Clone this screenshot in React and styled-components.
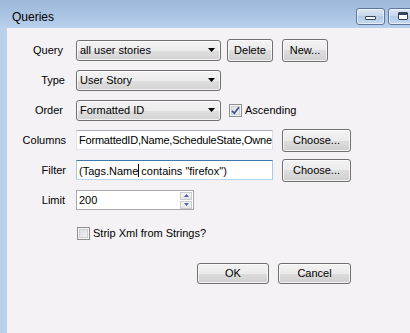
import React from "react";
import styled, { createGlobalStyle } from "styled-components";

const GlobalStyle = createGlobalStyle`
  html, body { margin: 0; padding: 0; background: #f5f2f5; }
  body { font-family: "Liberation Sans", Arial, sans-serif; font-size: 11px; color: #000; }
  * { box-sizing: border-box; }
`;

const Window = styled.div`
  width: 410px;
  height: 333px;
  overflow: hidden;
  display: flex;
  flex-direction: column;
  background: #b9d1ea;
`;

const TitleBar = styled.div`
  height: 28px;
  flex-shrink: 0;
  display: flex;
  align-items: flex-start;
  justify-content: space-between;
  padding-left: 12px;
  background: linear-gradient(#9db8d9, #a9c3e2 50%, #b9d1ec);
`;

const Title = styled.span`
  font-size: 12px;
  line-height: 14px;
  margin-top: 10px;
`;

const CaptionGroup = styled.div`
  display: flex;
  gap: 3px;
  margin-top: 8px;
  margin-right: -7px;
  flex-shrink: 0;
`;

const CaptionButton = styled.div`
  width: 29px;
  height: 17px;
  border: 1px solid #5d789c;
  border-radius: 3px;
  background: linear-gradient(#dce7f4, #c6d7ec 45%, #b4cae5 50%, #c5d9ef);
  box-shadow: inset 0 0 0 1px rgba(255, 255, 255, 0.55);
  display: flex;
  justify-content: center;
  align-items: flex-start;
`;

const MinGlyph = styled.div`
  width: 11px;
  height: 4px;
  margin-top: 7px;
  border: 1px solid #34435a;
  border-radius: 1px;
  background: #fff;
`;

const MaxGlyph = styled.div`
  width: 10px;
  height: 8px;
  margin-top: 3px;
  border: 1px solid #34435a;
  border-radius: 1px;
  background: #fff;
  box-shadow: inset 0 2px 0 #34435a;
`;

const Client = styled.div`
  flex: 1;
  margin-left: 7px;
  background: #f5f2f5;
  display: flex;
  flex-direction: column;
  padding-top: 7px;
`;

const Row = styled.div`
  display: flex;
  align-items: center;
  height: 30px;
  flex-shrink: 0;
  padding-left: ${(p) => p.$indent || 0}px;
  margin-top: ${(p) => p.$gap || 0}px;
`;

const Label = styled.span`
  width: 59px;
  flex-shrink: 0;
  text-align: right;
  padding-right: ${(p) => p.$inset || 0}px;
  margin-right: 10px;
  white-space: nowrap;
`;

const Combo = styled.div`
  width: 145px;
  height: 21px;
  border: 1px solid #707070;
  border-radius: 3px;
  background: linear-gradient(#f3f3f3 0%, #ececec 50%, #dfdfdf 50%, #d3d3d3 100%);
  box-shadow: inset 0 0 0 1px rgba(255, 255, 255, 0.7);
  display: flex;
  align-items: center;
  justify-content: space-between;
  padding: 0 5px 0 3px;
  white-space: nowrap;
`;

const Button = styled.div`
  width: ${(p) => p.$w}px;
  height: ${(p) => p.$h || 23}px;
  margin-left: ${(p) => p.$ml || 0}px;
  flex-shrink: 0;
  border: 1px solid #707070;
  border-radius: 3px;
  background: linear-gradient(#f2f2f2 0%, #ebebeb 50%, #dddddd 50%, #cfcfcf 100%);
  box-shadow: inset 0 0 0 1px rgba(255, 255, 255, 0.75);
  display: flex;
  align-items: center;
  justify-content: center;
  white-space: nowrap;
`;

const TextBox = styled.div`
  width: ${(p) => p.$w}px;
  height: 20px;
  flex-shrink: 0;
  background: #fff;
  border: 1px solid;
  border-color: ${(p) =>
    p.$focused ? "#3d7bad #a4c9e3 #b7d5ed #a4c9e3" : "#abadb3 #dbdfe6 #e3e9ef #e2e3ea"};
  display: flex;
  align-items: center;
  padding-left: 2px;
  overflow: hidden;
  white-space: nowrap;
  letter-spacing: ${(p) => p.$tight ? "-0.2px" : "normal"};
`;

const Caret = styled.span`
  display: inline-block;
  width: 1px;
  height: 13px;
  margin-right: -1px;
  background: #000;
  vertical-align: -2px;
`;

const Numeric = styled.div`
  width: 118px;
  height: 20px;
  background: #fff;
  border: 1px solid #a9a9a9;
  display: flex;
  align-items: center;
  justify-content: space-between;
  padding: 0 1px 0 2px;
`;

const Spinner = styled.div`
  display: flex;
  flex-direction: column;
  gap: 1px;
`;

const SpinButton = styled.div`
  width: 12px;
  height: 8px;
  border: 1px solid #c9cbd0;
  background: linear-gradient(#f7f7f7, #e4e4e4);
  display: flex;
  align-items: center;
  justify-content: center;
`;

const CheckBox = styled.div`
  width: 13px;
  height: 13px;
  flex-shrink: 0;
  margin-left: ${(p) => p.$ml || 0}px;
  margin-right: 3px;
  border: 1px solid #8e8f8f;
  background: linear-gradient(135deg, #d6d8db, #f7f7f7);
  box-shadow: inset 0 0 0 1px #f4f4f4, inset 0 0 0 2px #cdd0d4;
  display: flex;
  align-items: center;
  justify-content: center;
`;

const Footer = styled(Row)`
  justify-content: flex-end;
  padding-right: 59px;
`;

const Arrow = ({ color = "#000", w = 7, h = 4, up = false }) => (
  <svg width={w} height={h} viewBox={`0 0 ${w} ${h}`}>
    <polygon
      points={up ? `0,${h} ${w / 2},0 ${w},${h}` : `0,0 ${w},0 ${w / 2},${h}`}
      fill={color}
    />
  </svg>
);

const Check = () => (
  <svg width="9" height="9" viewBox="0 0 9 9">
    <path d="M1 4.8 L3.3 7.3 L8 1.2" stroke="#3a4f8c" strokeWidth="1.7" fill="none" />
  </svg>
);

export default function App() {
  return (
    <>
      <GlobalStyle />
      <Window>
        <TitleBar>
          <Title>Queries</Title>
          <CaptionGroup>
            <CaptionButton>
              <MinGlyph />
            </CaptionButton>
            <CaptionButton>
              <MaxGlyph />
            </CaptionButton>
          </CaptionGroup>
        </TitleBar>
        <Client>
          <Row>
            <Label $inset={3}>Query</Label>
            <Combo>
              <span>all user stories</span>
              <Arrow />
            </Combo>
            <Button $w={46} $ml={6}>Delete</Button>
            <Button $w={46} $ml={9}>New...</Button>
          </Row>
          <Row>
            <Label $inset={1}>Type</Label>
            <Combo>
              <span>User Story</span>
              <Arrow />
            </Combo>
          </Row>
          <Row>
            <Label $inset={3}>Order</Label>
            <Combo>
              <span>Formatted ID</span>
              <Arrow />
            </Combo>
            <CheckBox $ml={8}>
              <Check />
            </CheckBox>
            <span>Ascending</span>
          </Row>
          <Row>
            <Label>Columns</Label>
            <TextBox $w={197} $tight>FormattedID,Name,ScheduleState,Owne</TextBox>
            <Button $w={69} $ml={9}>Choose...</Button>
          </Row>
          <Row>
            <Label>Filter</Label>
            <TextBox $w={197} $focused>
              <span>
                (Tags.Name<Caret /> contains "firefox")
              </span>
            </TextBox>
            <Button $w={69} $ml={9}>Choose...</Button>
          </Row>
          <Row>
            <Label $inset={1}>Limit</Label>
            <Numeric>
              <span>200</span>
              <Spinner>
                <SpinButton>
                  <Arrow up color="#4d60a0" w={5} h={3} />
                </SpinButton>
                <SpinButton>
                  <Arrow color="#4d60a0" w={5} h={3} />
                </SpinButton>
              </Spinner>
            </Numeric>
          </Row>
          <Row $indent={70} $gap={3}>
            <CheckBox />
            <span>Strip Xml from Strings?</span>
          </Row>
          <Footer $gap={10}>
            <Button $w={72} $h={21}>OK</Button>
            <Button $w={73} $h={21} $ml={9}>Cancel</Button>
          </Footer>
        </Client>
      </Window>
    </>
  );
}
